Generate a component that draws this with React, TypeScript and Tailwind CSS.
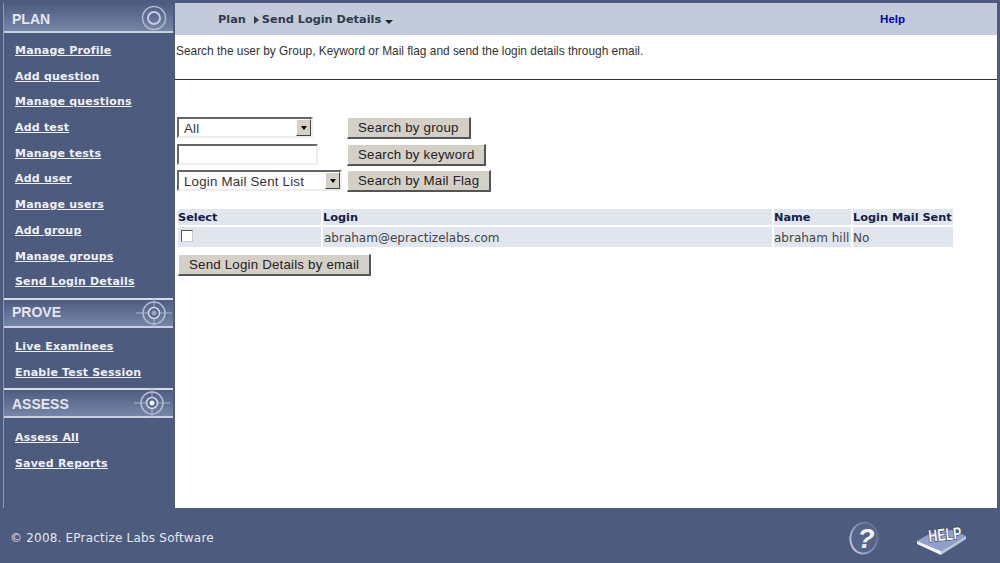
import React from "react";

const verdana = "font-['DejaVu_Sans',sans-serif]";
const arial = "font-['Liberation_Sans',Arial,sans-serif]";

function Target({ kind }: { kind: "plan" | "prove" | "assess" }) {
  if (kind === "plan") {
    return (
      <svg width="28" height="28" viewBox="0 0 28 28" className="block">
        <circle cx="14" cy="14" r="11.5" fill="none" stroke="#aeb8cf" strokeWidth="1.5" />
        <circle cx="14" cy="14" r="6" fill="none" stroke="#c3cbdc" strokeWidth="2" />
      </svg>
    );
  }
  const centre = kind === "assess" ? "#f1f3f8" : "#9aa6c2";
  return (
    <svg width="36" height="30" viewBox="0 0 36 30" className="block">
      <line x1="0" y1="15" x2="36" y2="15" stroke="#aab4cc" strokeWidth="1" />
      <line x1="18" y1="0" x2="18" y2="30" stroke="#aab4cc" strokeWidth="1" />
      <circle cx="18" cy="15" r="11" fill="none" stroke="#b3bcd2" strokeWidth="1.5" />
      <circle cx="18" cy="15" r="5.5" fill="#55648a" stroke="#d4d9e6" strokeWidth="1.5" />
      <circle cx="18" cy="15" r="2.5" fill={centre} />
    </svg>
  );
}

function SectionHead({ title, kind, top }: { title: string; kind: "plan" | "prove" | "assess"; top?: boolean }) {
  return (
    <div
      className={`flex items-center justify-between bg-gradient-to-b from-[#4f5d80] to-[#7685a8] border-b-2 border-[#c9d0df] ${
        top ? "h-[29px] mt-px" : "h-[30px] border-t-2 border-t-[#d5dae6]"
      } ${kind === "plan" ? "pr-[5px]" : kind === "prove" ? "pr-px" : "pr-[3px]"} pl-[8px]`}
    >
      <span className={`${arial} font-bold text-[14px] text-[#e4e7ef] ${kind === "prove" ? "" : "pt-[3px]"}`}>{title}</span>
      <Target kind={kind} />
    </div>
  );
}

function NavLink({ children }: { children: string }) {
  return (
    <a className={`${verdana} block h-[25.7px] leading-[25.7px] pl-[11px] font-bold text-[11px] tracking-[0.2px] underline text-[#eef0f6]`}>
      {children}
    </a>
  );
}

const btn = `${arial} h-[22px] pt-px px-[10px] bg-[#d4d0c8] text-[13.3px] tracking-[0.2px] text-[#222] border border-t-white border-l-white border-r-[#555] border-b-[#555] border-b-2 border-r-2 leading-none whitespace-nowrap`;

function SelectBox({ label, width }: { label: string; width: string }) {
  return (
    <div className={`relative ${width} h-[21px] bg-white border-2 border-t-[#666] border-l-[#666] border-r-[#eee] border-b-[#eee] overflow-hidden`}>
      <select className={`${arial} block appearance-none w-full h-[17px] pt-px pb-0 pl-[5px] text-[13.3px] leading-[17px] tracking-[0.2px] text-[#333] bg-white outline-none`} defaultValue={label}>
        <option>{label}</option>
      </select>
      <div className="absolute right-0 top-0 w-[15px] h-[17px] bg-[#d4d0c8] border border-t-white border-l-white border-r-[#444] border-b-[#444] flex items-center justify-center">
        <div className="w-0 h-0 border-x-[3.5px] border-x-transparent border-t-[4px] border-t-black" />
      </div>
    </div>
  );
}

export default function App() {
  return (
    <div className="w-[1000px] h-[563px] overflow-hidden bg-[#4d5b7e] flex flex-col">
      <div className="flex h-[508px] pt-[3px] pl-[3px] pr-[3px] gap-[2px]">
        {/* Sidebar */}
        <aside className="w-[170px] shrink-0 border-l border-[#8b96b0]">
          <SectionHead title="PLAN" kind="plan" top />
          <nav className="pt-[5px] pb-[3px]">
            {["Manage Profile", "Add question", "Manage questions", "Add test", "Manage tests", "Add user", "Manage users", "Add group", "Manage groups", "Send Login Details"].map((t) => (
              <NavLink key={t}>{t}</NavLink>
            ))}
          </nav>
          <SectionHead title="PROVE" kind="prove" />
          <nav className="pt-[6px] pb-[3px]">
            {["Live Examinees", "Enable Test Session"].map((t) => (
              <NavLink key={t}>{t}</NavLink>
            ))}
          </nav>
          <SectionHead title="ASSESS" kind="assess" />
          <nav className="pt-[7px]">
            {["Assess All", "Saved Reports"].map((t) => (
              <NavLink key={t}>{t}</NavLink>
            ))}
          </nav>
        </aside>

        {/* Main */}
        <main className="flex-1 bg-white flex flex-col">
          <div className="h-[32px] bg-[#c3cad9] flex items-center justify-between pl-[43px] pr-[92px] pt-[2px]">
            <div className={`${verdana} font-bold text-[11.3px] text-[#2f3a4f] flex items-center`}>
              <span>Plan</span>
              <span className="inline-block ml-[8px] mr-[3px] w-0 h-0 border-y-[4px] border-y-transparent border-l-[5px] border-l-[#2f3a4f]" />
              <span>Send Login Details</span>
              <span className="inline-block ml-[4px] mt-[4px] w-0 h-0 border-x-[4px] border-x-transparent border-t-[4px] border-t-[#222]" />
            </div>
            <a className={`${arial} font-bold text-[11.5px] text-[#0000b0]`}>Help</a>
          </div>
          <p className={`${arial} mt-[9px] ml-[1px] text-[11.9px] leading-[14px] text-[#333]`}>
            Search the user by Group, Keyword or Mail flag and send the login details through email.
          </p>
          <div className="mt-[21px] h-[1px] bg-[#333]" />

          <div className="mt-[37px] ml-[2px] grid grid-cols-[165px_auto] justify-start gap-y-[4.5px] gap-x-[5px] w-fit">
            <SelectBox label="All" width="w-[136px]" />
            <button className={`${btn} w-fit`}>Search by group</button>
            <input className="w-[141px] h-[21px] bg-white border-2 border-t-[#666] border-l-[#666] border-r-[#eee] border-b-[#eee]" />
            <button className={`${btn} w-fit`}>Search by keyword</button>
            <SelectBox label="Login Mail Sent List" width="w-[165px]" />
            <button className={`${btn} w-fit`}>Search by Mail Flag</button>
          </div>

          <div className={`mt-[17px] ml-[3px] grid grid-cols-[143px_449px_77px_100px] gap-x-[2px] gap-y-[2px] ${verdana} text-[12px]`}>
            {["Select", "Login", "Name", "Login Mail Sent"].map((h) => (
              <div key={h} className="h-[16px] leading-[18px] bg-[#e1e5ed] font-bold text-[11.3px] text-[#14204a] whitespace-nowrap">
                {h}
              </div>
            ))}
            <div className="h-[20px] bg-[#e1e5ed] flex items-center pl-[3px]">
              <div className="w-[12px] h-[12px] bg-white border border-t-[#555] border-l-[#555] border-r-[#ccc] border-b-[#ccc] -mt-[2px]" />
            </div>
            <div className="h-[20px] leading-[22px] bg-[#e1e5ed] text-[#444] pl-px">abraham@epractizelabs.com</div>
            <div className="h-[20px] leading-[22px] bg-[#e1e5ed] text-[#444] whitespace-nowrap">abraham hill</div>
            <div className="h-[20px] leading-[22px] bg-[#e1e5ed] text-[#444]">No</div>
          </div>

          <button className={`${btn} w-fit mt-[7px] ml-[3px]`}>Send Login Details by email</button>
        </main>
      </div>

      {/* Footer */}
      <footer className="flex-1 flex items-center justify-between pl-[10px] pr-[32px] pt-[5px]">
        <span className={`${verdana} text-[12px] text-[#e4e7ef] tracking-[0.2px]`}>© 2008. EPractize Labs Software</span>
        <div className="flex items-center gap-[36px]">
          <svg width="32" height="34" viewBox="0 0 32 34" className="block">
            <defs>
              <linearGradient id="rim" x1="0" y1="1" x2="1" y2="0">
                <stop offset="0" stopColor="#d5dae7" />
                <stop offset="0.5" stopColor="#7f8cad" />
                <stop offset="1" stopColor="#56648a" />
              </linearGradient>
            </defs>
            <ellipse cx="16" cy="17" rx="13.5" ry="15.5" fill="#56648a" stroke="url(#rim)" strokeWidth="2" transform="rotate(12 16 17)" />
            <text x="18" y="27" textAnchor="middle" fontFamily="Liberation Sans" fontStyle="italic" fontWeight="700" fontSize="28" fill="#f2f4f8">?</text>
          </svg>
          <svg width="52" height="36" viewBox="0 0 52 36" className="block">
            <polygon points="1,21 15,13 36,10 50,16 25,31" fill="#8fa0cc" />
            <polygon points="1,21 25,31 25,35 1,24" fill="#f4f5fa" />
            <polygon points="25,31 50,16 50,19 25,35" fill="#b9c3dc" />
            <text x="0" y="0" fontFamily="Liberation Sans" fontWeight="700" fontSize="17" fill="#f4f5fa" stroke="#2a2f3f" strokeWidth="1.2" paintOrder="stroke" transform="translate(13 22) rotate(-6) scale(0.73 1)">HELP</text>
          </svg>
        </div>
      </footer>
    </div>
  );
}
